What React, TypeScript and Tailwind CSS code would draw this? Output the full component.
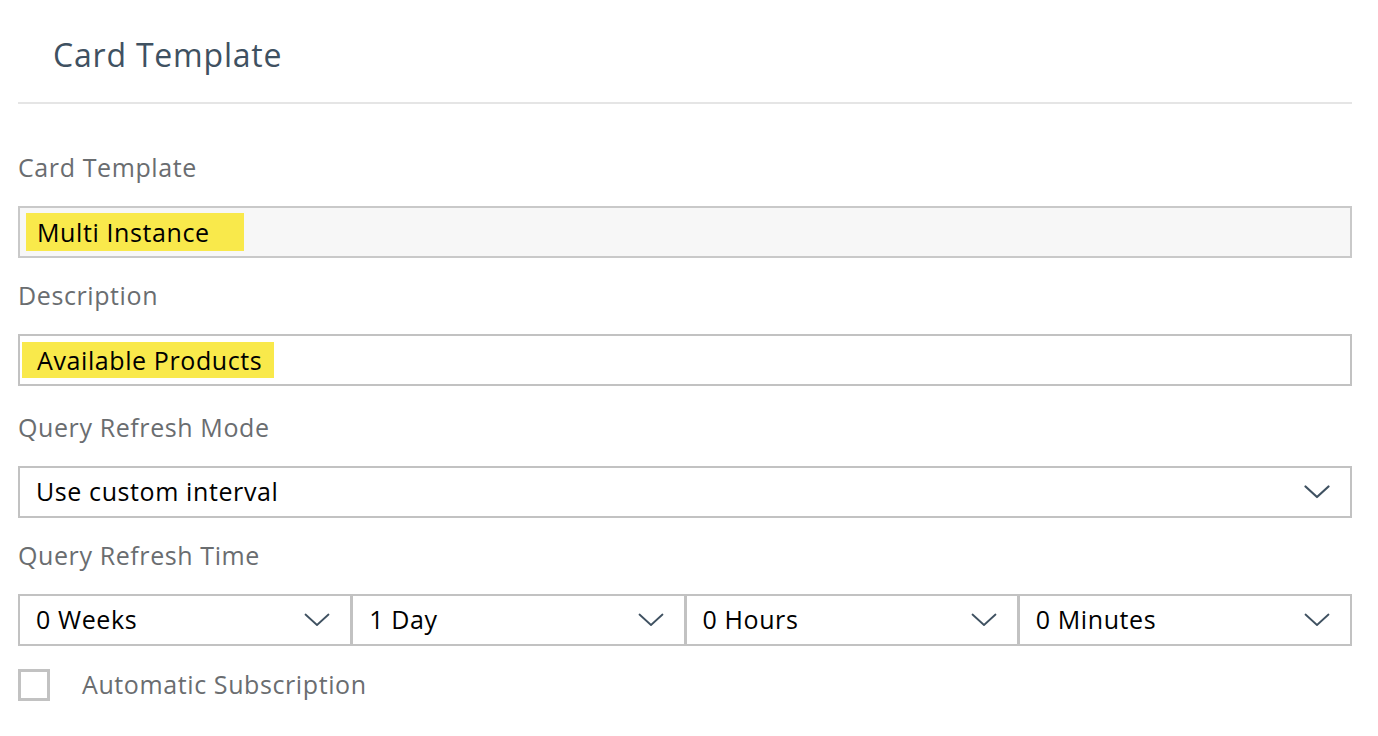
import { useState } from 'react';

const font = { fontFamily: '"Open Sans", "Noto Sans", sans-serif' };

function Chevron({ bold = false }: { bold?: boolean }) {
  return (
    <svg width="26" height="14" viewBox="0 0 26 14" fill="none" className="shrink-0">
      <path
        d="M1.5 1.5 L13 12 L24.5 1.5"
        stroke="#3f5161"
        strokeWidth={bold ? 2.2 : 1.8}
        strokeLinecap="round"
        strokeLinejoin="round"
      />
    </svg>
  );
}

function Label({ children, className = '' }: { children: string; className?: string }) {
  return (
    <div className={`h-[76px] flex items-center text-[25px] tracking-[0.6px] text-[#6a6d70] ${className}`}>
      {children}
    </div>
  );
}

function Select({ value, className = '' }: { value: string; className?: string }) {
  return (
    <div
      className={`h-[52px] flex items-center justify-between border-2 border-[#c2c2c2] bg-white pl-[16px] pr-[20px] text-[25px] tracking-[0.6px] text-black ${className}`}
    >
      <span>{value}</span>
      <Chevron />
    </div>
  );
}

export default function App() {
  const [checked, setChecked] = useState(false);

  return (
    <div className="w-[1378px] h-[736px] bg-white overflow-hidden" style={font}>
      <div className="pl-[18px] pr-[26px]">
        {/* Header */}
        <div className="h-[104px] flex items-center pl-[35px] pt-[8px] border-b-2 border-[#e5e5e5] text-[32px] tracking-[0.8px] text-[#3f5161]">
          Card Template
        </div>

        <div className="pt-[26px]">
          <Label>Card Template</Label>
          <div className="h-[52px] flex items-center border-2 border-[#c9c9c9] bg-[#f7f7f7] pl-[6px] text-[25px] tracking-[0.6px]">
            <span className="bg-[#f9e94b] text-black pl-[11px] pr-[34px] py-[2px] leading-[34px]">Multi Instance</span>
          </div>

          <Label>Description</Label>
          <div className="h-[52px] flex items-center border-2 border-[#c2c2c2] bg-white pl-[2px] text-[25px] tracking-[0.6px]">
            <span className="bg-[#f9e94b] text-black pl-[15px] pr-[12px] py-[1px] leading-[34px]">Available Products</span>
          </div>

          <Label className="mt-[4px]">Query Refresh Mode</Label>
          <div className="h-[52px] flex items-center justify-between border-2 border-[#c2c2c2] bg-white pl-[16px] pr-[20px] text-[25px] tracking-[0.6px] text-black">
            <span>Use custom interval</span>
            <Chevron bold />
          </div>

          <Label>Query Refresh Time</Label>
          <div className="flex">
            <Select value="0 Weeks" className="flex-1" />
            <Select value="1 Day" className="flex-1 -ml-[1px]" />
            <Select value="0 Hours" className="flex-1 -ml-[1px]" />
            <Select value="0 Minutes" className="flex-1 -ml-[1px]" />
          </div>

          <label className="mt-[20px] flex items-center gap-[32px] cursor-pointer">
            <span
              onClick={() => setChecked(!checked)}
              className="w-[32px] h-[32px] border-[3px] border-[#c2c2c2] bg-white flex items-center justify-center text-[#3f5161]"
            >
              {checked ? '✓' : ''}
            </span>
            <span className="text-[25px] tracking-[0.6px] text-[#6a6d70]">Automatic Subscription</span>
          </label>
        </div>
      </div>
    </div>
  );
}
